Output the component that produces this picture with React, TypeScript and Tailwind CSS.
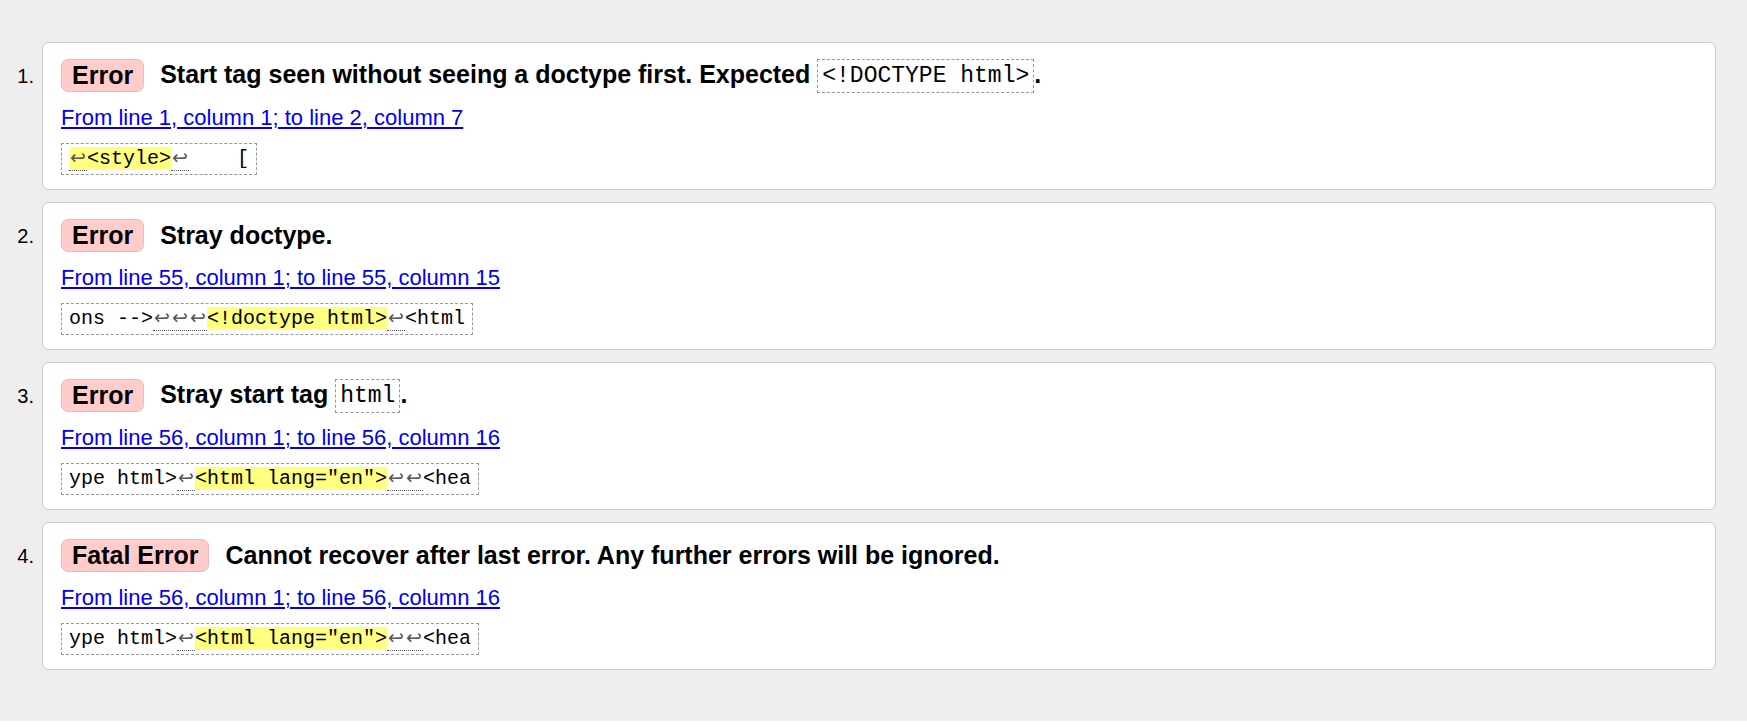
import React from "react";

type Part = { t: string; lf?: boolean; hl?: boolean };

type Msg = {
  kind: string;
  title: React.ReactNode;
  link: string;
  extract: Part[];
};

const Code = ({ children }: { children: React.ReactNode }) => (
  <code className="inline-block border border-dashed border-[#999] px-[4px] font-['Liberation_Mono','DejaVu_Sans_Mono',monospace] text-[23px] font-normal leading-[32px] align-middle">
    {children}
  </code>
);

const messages: Msg[] = [
  {
    kind: "Error",
    title: (
      <>
        Start tag seen without seeing a doctype first. Expected <Code>{"<!DOCTYPE html>"}</Code>.
      </>
    ),
    link: "From line 1, column 1; to line 2, column 7",
    extract: [
      { t: "↩", lf: true, hl: true },
      { t: "<style>", hl: true },
      { t: "↩", lf: true },
      { t: "    [" },
    ],
  },
  {
    kind: "Error",
    title: "Stray doctype.",
    link: "From line 55, column 1; to line 55, column 15",
    extract: [
      { t: "ons -->" },
      { t: "↩↩↩", lf: true },
      { t: "<!doctype html>", hl: true },
      { t: "↩", lf: true },
      { t: "<html" },
    ],
  },
  {
    kind: "Error",
    title: (
      <>
        Stray start tag <Code>html</Code>.
      </>
    ),
    link: "From line 56, column 1; to line 56, column 16",
    extract: [
      { t: "ype html>" },
      { t: "↩", lf: true },
      { t: '<html lang="en">', hl: true },
      { t: "↩↩", lf: true },
      { t: "<hea" },
    ],
  },
  {
    kind: "Fatal Error",
    title: "Cannot recover after last error. Any further errors will be ignored.",
    link: "From line 56, column 1; to line 56, column 16",
    extract: [
      { t: "ype html>" },
      { t: "↩", lf: true },
      { t: '<html lang="en">', hl: true },
      { t: "↩↩", lf: true },
      { t: "<hea" },
    ],
  },
];

// line feed markers: one fixed cell per arrow, dotted line beneath the run
const LineFeeds = ({ count }: { count: number }) => (
  <span className="inline-block border-b border-dotted border-[#555] leading-[22px] text-[#555]">
    {Array.from({ length: count }).map((_, i) => (
      <span key={i} className="inline-block w-[18px] text-center font-['DejaVu_Sans',sans-serif] text-[19px]">
        ↩
      </span>
    ))}
  </span>
);

const Extract = ({ parts }: { parts: Part[] }) => (
  <div className="mt-[12px] inline-block border border-dashed border-[#999] px-[7px] font-['Liberation_Mono','DejaVu_Sans_Mono',monospace] text-[20px] leading-[30px] whitespace-pre text-black">
    {parts.map((p, i) => (
      <span key={i} className={p.hl ? "bg-[#ffff80]" : ""}>
        {p.lf ? <LineFeeds count={p.t.length} /> : p.t}
      </span>
    ))}
  </div>
);

export default function App() {
  return (
    <div className="h-[721px] bg-[#eeeeee] pt-[42px] pr-[31px] font-['Liberation_Sans',Arial,sans-serif] text-black">
      <ol className="flex flex-col gap-[12px]">
        {messages.map((m, i) => (
          <li key={i} className="flex">
            <div className="w-[34px] shrink-0 pt-[22px] text-right text-[20px] leading-[24px]">
              {i + 1}.
            </div>
            <div className="ml-[8px] flex-1 rounded-[6px] border border-[#ccc] bg-white px-[18px] pt-[15px] pb-[14px]">
              <div className="flex h-[35px] items-center gap-[16px]">
                <span className="rounded-[7px] border border-[#ebb] bg-[#ffcccc] px-[10px] text-[25px] font-bold leading-[31px]">
                  {m.kind}
                </span>
                <p className="text-[25px] font-bold leading-[33px]">{m.title}</p>
              </div>
              <a
                href="#"
                className="mt-[12px] block w-fit text-[22px] leading-[26px] text-[#0000ee] underline"
              >
                {m.link}
              </a>
              <Extract parts={m.extract} />
            </div>
          </li>
        ))}
      </ol>
    </div>
  );
}
